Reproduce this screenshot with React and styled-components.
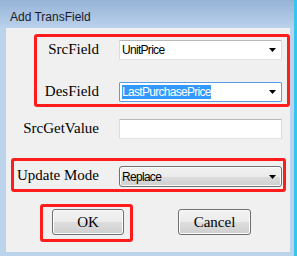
import React from "react";
import styled, { createGlobalStyle } from "styled-components";

const GlobalStyle = createGlobalStyle`
  html, body {
    margin: 0;
    padding: 0;
  }
  body {
    width: 297px;
    height: 256px;
    overflow: hidden;
    background: #bcd3ec;
  }
`;

const Window = styled.div`
  width: 297px;
  height: 256px;
  box-sizing: border-box;
  display: flex;
  flex-direction: column;
  padding: 0 4px 4px 6px;
  background: linear-gradient(#96b3d6 0px, #b5cde9 24px, #bcd3ec 28px, #bcd3ec 100%);
  border-right: 3px solid #35c6ef;
`;

const TitleBar = styled.div`
  height: 28px;
  box-sizing: border-box;
  padding: 10px 0 0 4px;
  font-family: "Liberation Sans", Arial, sans-serif;
  font-size: 12px;
  line-height: 14px;
  color: #1a1a2a;
`;

const Client = styled.div`
  height: 224px;
  box-sizing: border-box;
  background: #f0f0f0;
  padding-top: 6px;
  display: flex;
  flex-direction: column;
  align-items: flex-start;
`;

const Highlight = styled.div`
  box-sizing: border-box;
  border: 3px solid #ff1c1c;
  border-radius: 3px;
  display: flex;
  flex-direction: column;
  gap: ${(p) => p.$gap || 0}px;
  width: ${(p) => p.$width}px;
  margin-left: ${(p) => p.$left || 0}px;
  margin-top: ${(p) => p.$top || 0}px;
  padding: ${(p) => p.$pad};
`;

const Row = styled.div`
  display: grid;
  grid-template-columns: ${(p) => p.$labelWidth}px 163px;
  column-gap: 20px;
  align-items: center;
  margin-top: ${(p) => p.$top || 0}px;
`;

const Label = styled.div`
  text-align: right;
  font-family: "Liberation Serif", "Times New Roman", serif;
  font-size: 15px;
  line-height: 15px;
  color: #000;
  white-space: nowrap;
  margin-bottom: 2px;
`;

const Field = styled.div`
  box-sizing: border-box;
  height: ${(p) => (p.$variant === "list" ? 21 : 20)}px;
  display: flex;
  align-items: center;
  justify-content: space-between;
  padding: 0 5px 0 2px;
  font-family: "Liberation Sans", Arial, sans-serif;
  font-size: 12px;
  letter-spacing: -0.7px;
  color: #000;
  background: ${(p) =>
    p.$variant === "list"
      ? "linear-gradient(#f2f2f2 0%, #ebebeb 50%, #dddddd 51%, #cfcfcf 100%)"
      : "#ffffff"};
  border: 1px solid;
  border-color: ${(p) =>
    p.$variant === "focus"
      ? "#569de5"
      : p.$variant === "list"
      ? "#707070"
      : "#b9b9b9 #dcdcdc #e3e3e3 #dcdcdc"};
  border-radius: ${(p) => (p.$variant === "list" ? 3 : 1)}px;
  box-shadow: ${(p) =>
    p.$variant === "list" ? "inset 0 0 0 1px #fbfbfb" : "none"};
`;

const Selected = styled.span`
  display: inline-block;
  line-height: 14px;
  background: #3399ff;
  color: #fff;
`;

const Arrow = () => (
  <svg width="7" height="4" viewBox="0 0 7 4">
    <path d="M0 0 H7 L3.5 4 Z" fill="#000" />
  </svg>
);

const Footer = styled.div`
  display: flex;
  align-items: flex-start;
  margin-top: 12px;
  padding-left: 34px;
`;

const OkBox = styled(Highlight)`
  height: 38px;
`;

const Button = styled.button`
  box-sizing: border-box;
  width: ${(p) => p.$width}px;
  height: 26px;
  margin: ${(p) => p.$margin || 0};
  padding: 0;
  font-family: "Liberation Serif", "Times New Roman", serif;
  font-size: 15px;
  color: #000;
  border: 1px solid #707070;
  border-radius: 3px;
  background: linear-gradient(#f2f2f2 0%, #ebebeb 50%, #dddddd 51%, #cfcfcf 100%);
  box-shadow: inset 0 0 0 1px #fcfcfc;
`;

export default function App() {
  return (
    <>
      <GlobalStyle />
      <Window>
        <TitleBar>Add TransField</TitleBar>
        <Client>
          <Highlight $width={256} $left={28} $gap={22} $pad="3px 0 2px 0">
            <Row $labelWidth={62}>
              <Label>SrcField</Label>
              <Field $variant="edit">
                <span>UnitPrice</span>
                <Arrow />
              </Field>
            </Row>
            <Row $labelWidth={62}>
              <Label>DesField</Label>
              <Field $variant="focus">
                <Selected>LastPurchasePrice</Selected>
                <Arrow />
              </Field>
            </Row>
          </Highlight>

          <Row $labelWidth={93} $top={12}>
            <Label>SrcGetValue</Label>
            <Field $variant="edit" />
          </Row>

          <Highlight $width={275} $left={5} $top={19} $pad="5px 0 2px 0">
            <Row $labelWidth={85}>
              <Label>Update Mode</Label>
              <Field $variant="list">
                <span>Replace</span>
                <Arrow />
              </Field>
            </Row>
          </Highlight>

          <Footer>
            <OkBox $width={93} $pad="2px 6px 4px 9px">
              <Button $width={72}>OK</Button>
            </OkBox>
            <Button $width={73} $margin="5px 0 0 45px">
              Cancel
            </Button>
          </Footer>
        </Client>
      </Window>
    </>
  );
}
